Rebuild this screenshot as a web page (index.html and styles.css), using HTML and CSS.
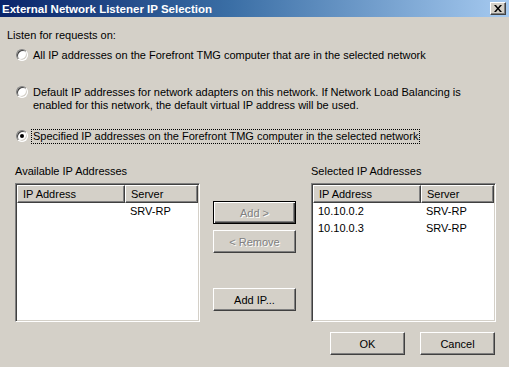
FILE: index.html
```html
<!DOCTYPE html>
<html lang="en">
<head>
    <meta charset="UTF-8">
    <title>External Network Listener IP Selection</title>
    <link rel="stylesheet" href="styles.css">
</head>
<body>
    <div class="dialog">
        <div class="titlebar">
            <span class="title">External Network Listener IP Selection</span>
            <span class="close">
                <svg width="8" height="7" viewBox="0 0 8 7">
                    <path d="M0 0h2l2 2.5L6 0h2L5 3.5 8 7H6L4 4.5 2 7H0l3-3.5z" fill="#000"/>
                </svg>
            </span>
        </div>

        <div class="body">
            <div class="lead">Listen for requests on:</div>

            <label class="option first">
                <span class="radio"></span>
                <span class="text">All IP addresses on the Forefront TMG computer that are in the selected network</span>
            </label>
            <label class="option second">
                <span class="radio"></span>
                <span class="text">Default IP addresses for network adapters on this network. If Network Load Balancing is<br>enabled for this network, the default virtual IP address will be used.</span>
            </label>
            <label class="option third">
                <span class="radio checked"></span>
                <span class="text focused">Specified IP addresses on the Forefront TMG computer in the selected network</span>
            </label>

            <div class="lists">
                <div class="col">
                    <div class="caption">Available IP Addresses</div>
                    <div class="listview">
                        <div class="header">
                            <span class="hcell ip">IP Address</span>
                            <span class="hcell server">Server</span>
                        </div>
                        <div class="row">
                            <span class="cell ip"></span>
                            <span class="cell server">SRV-RP</span>
                        </div>
                    </div>
                </div>

                <div class="middle">
                    <button class="btn default" disabled>Add &gt;</button>
                    <button class="btn" disabled>&lt; Remove</button>
                    <button class="btn addip">Add IP...</button>
                </div>

                <div class="col">
                    <div class="caption">Selected IP Addresses</div>
                    <div class="listview">
                        <div class="header">
                            <span class="hcell ip">IP Address</span>
                            <span class="hcell server">Server</span>
                        </div>
                        <div class="row">
                            <span class="cell ip">10.10.0.2</span>
                            <span class="cell server">SRV-RP</span>
                        </div>
                        <div class="row">
                            <span class="cell ip">10.10.0.3</span>
                            <span class="cell server">SRV-RP</span>
                        </div>
                    </div>
                </div>
            </div>

            <div class="footer">
                <button class="btn">OK</button>
                <button class="btn">Cancel</button>
            </div>
        </div>
    </div>
</body>
</html>
```

FILE: styles.css
```css
body {
    margin: 0;
    background-color: #d4d0c8;
    font-family: "Liberation Sans", Arial, sans-serif;
    font-size: 11px;
    color: #000;
}
.dialog {
    width: 509px;
    height: 367px;
    background-color: #d4d0c8;
    overflow: hidden;
}
.titlebar {
    height: 17px;
    display: flex;
    align-items: center;
    justify-content: space-between;
    padding: 0 3px 0 2px;
    background: linear-gradient(to right, #0a246a 0%, #3a6ea5 45%, #a6caf0 100%);
}
.title {
    color: #fff;
    font-weight: bold;
    font-size: 11.5px;
}
.close {
    width: 16px;
    height: 13px;
    box-sizing: border-box;
    background-color: #d4d0c8;
    border-top: 1px solid #fff;
    border-left: 1px solid #fff;
    border-right: 1px solid #404040;
    border-bottom: 1px solid #404040;
    box-shadow: inset -1px -1px 0 #808080;
    display: flex;
    align-items: center;
    justify-content: center;
}
.body {
    padding: 12px 0 0 0;
    line-height: 13px;
}
.lead {
    padding-left: 7px;
}
.option {
    display: flex;
    align-items: flex-start;
    padding-left: 16px;
}
.option.first { margin-top: 7px; }
.option.second { margin-top: 24px; }
.option.third { margin-top: 18px; }
.radio {
    width: 12px;
    height: 12px;
    box-sizing: border-box;
    border-radius: 50%;
    background-color: #fff;
    border-top: 1px solid #808080;
    border-left: 1px solid #808080;
    border-right: 1px solid #fff;
    border-bottom: 1px solid #fff;
    box-shadow: inset 1px 1px 0 #404040, inset -1px -1px 0 #d4d0c8;
    margin: 0 5px 0 0;
    flex: none;
    display: flex;
    align-items: center;
    justify-content: center;
}
.radio.checked::after {
    content: "";
    width: 4px;
    height: 4px;
    border-radius: 50%;
    background-color: #000;
}
.text.focused {
    outline: 1px dotted #000;
    outline-offset: 0;
    padding: 0 1px;
    margin-left: -1px;
}
.lists {
    display: flex;
    margin-top: 22px;
    padding-left: 15px;
}
.col {
    display: flex;
    flex-direction: column;
}
.caption {
    height: 18px;
}
.listview {
    width: 185px;
    height: 139px;
    box-sizing: border-box;
    background-color: #fff;
    border-top: 1px solid #808080;
    border-left: 1px solid #808080;
    border-right: 1px solid #fff;
    border-bottom: 1px solid #fff;
    box-shadow: inset 1px 1px 0 #404040, inset -1px -1px 0 #d4d0c8;
    padding: 1px;
}
.header {
    display: flex;
    height: 18px;
}
.hcell {
    box-sizing: border-box;
    background-color: #d4d0c8;
    border-top: 1px solid #fff;
    border-left: 1px solid #fff;
    border-right: 1px solid #404040;
    border-bottom: 1px solid #404040;
    box-shadow: inset -1px -1px 0 #808080;
    padding: 2px 5px 1px;
    line-height: 13px;
}
.hcell.ip { width: 108px; }
.hcell.server { width: 73px; }
.row {
    display: flex;
    height: 17px;
    align-items: center;
}
.cell {
    padding-left: 5px;
    box-sizing: border-box;
}
.cell.ip { width: 108px; }
.middle {
    display: flex;
    flex-direction: column;
    width: 83px;
    margin: 0 15px 0 13px;
    padding-top: 36px;
}
.btn {
    width: 83px;
    height: 23px;
    box-sizing: border-box;
    background-color: #d4d0c8;
    border-top: 1px solid #fff;
    border-left: 1px solid #fff;
    border-right: 1px solid #404040;
    border-bottom: 1px solid #404040;
    box-shadow: inset -1px -1px 0 #808080;
    font-family: "Liberation Sans", Arial, sans-serif;
    font-size: 11px;
    color: #000;
    padding: 0;
    margin-bottom: 6px;
}
.btn.default {
    border: 1px solid #000;
    box-shadow: inset 1px 1px 0 #fff, inset -1px -1px 0 #404040, inset -2px -2px 0 #808080;
}
.btn:disabled {
    color: #808080;
    text-shadow: 1px 1px 0 #fff;
}
.btn.addip {
    margin-top: 29px;
}
.footer {
    display: flex;
    justify-content: flex-end;
    gap: 15px;
    padding-right: 14px;
    margin-top: 10px;
}
.footer .btn {
    width: 75px;
}
```
